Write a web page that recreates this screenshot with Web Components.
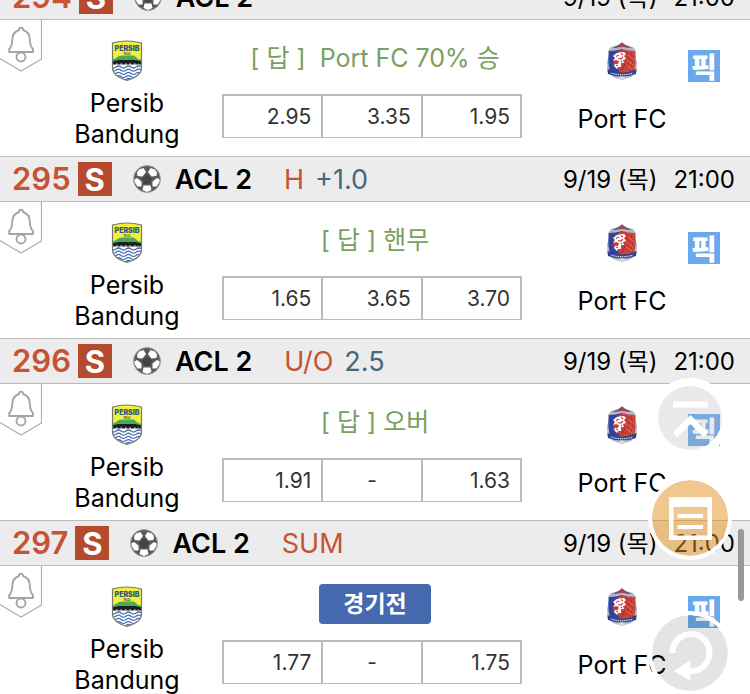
<!DOCTYPE html>
<html lang="ko">
<head>
<meta charset="utf-8">
<meta name="viewport" content="width=device-width, initial-scale=1">
<title>ACL 2</title>
<style>
html, body { margin: 0; height: 100%; overflow: hidden; background: #fff; }
body { font-family: Inter, "Noto Sans CJK KR", sans-serif; color: #000; }
</style>
</head>
<body>
<match-app></match-app>

<template id="t-app">
<style>
:host { display: block; position: relative; height: 100vh; overflow: hidden; }
main { margin-top: -26px; }
.thumb { position: absolute; right: 6px; top: 529px; width: 6px; height: 72px; border-radius: 3px; background: #999; }
</style>
<main>
<match-row no="294" market="" day="9/19 (목)" time="21:00" odds="2.95,3.35,1.95"><answer-text>[ 답 ]&nbsp; Port FC 70% 승</answer-text></match-row>
<match-row no="295" market="H" line="+1.0" day="9/19 (목)" time="21:00" odds="1.65,3.65,3.70"><answer-text>[ 답 ] 핸무</answer-text></match-row>
<match-row no="296" market="U/O" line="2.5" day="9/19 (목)" time="21:00" odds="1.91,-,1.63"><answer-text>[ 답 ] 오버</answer-text></match-row>
<match-row no="297" market="SUM" day="9/19 (목)" time="21:00" odds="1.77,-,1.75"><status-badge>경기전</status-badge></match-row>
</main>
<float-tools></float-tools>
<div class="thumb"></div>
</template>

<template id="t-row">
<style>
:host { display: block; }
header { box-sizing: border-box; height: 46px; display: flex; align-items: center; padding: 0 15px 0 12px; background: #ececec; border-top: 1px solid #bbb; border-bottom: 1px solid #bbb; white-space: nowrap; }
header span { line-height: 36px; }
.no { font-size: 31px; font-weight: 600; color: #c65336; margin-right: 7px; }
.s { width: 34px; height: 34px; text-align: center; font-size: 31px; font-weight: 700; color: #fff; background: #b64a2e; }
soccer-ball { margin: 0 14px 0 21px; }
.league { font-size: 27px; font-weight: 600; }
.market { font-size: 27px; color: #c65336; margin-left: 32px; }
.line { font-size: 27px; color: #44697f; margin-left: 11px; }
.league, .market, .line, .when { padding-top: 2px; }
.when { margin-left: auto; display: flex; align-items: baseline; gap: 16px; font-size: 24px; }
.body { display: grid; grid-template-columns: 42px 170px minmax(0,1fr) 132px 62px; height: 136px; }
.team { display: flex; flex-direction: column; align-items: center; padding-top: 20px; }
.name { height: 62px; margin-top: 6px; display: flex; align-items: center; text-align: center; font-size: 25px; line-height: 31px; }
.home .name { width: 110px; justify-content: center; }
.mid { padding: 0 34px 0 10px; }
.answer { height: 76px; padding-left: 6px; display: flex; align-items: center; justify-content: center; }
odds-table { margin-top: -2px; }
.pick { appearance: none; border: 0; padding: 0; margin: 30px 0 0; width: 32px; height: 32px; background: #6aa9ee; color: #fff; font: 900 28px/30px "Noto Sans CJK KR", sans-serif; display: block; }
</style>
<header>
<span class="no"></span><span class="s">S</span><soccer-ball></soccer-ball><span class="league">ACL 2</span><span class="market"></span><span class="line"></span>
<span class="when"><span class="day"></span><span class="time"></span></span>
</header>
<div class="body">
<bell-tab></bell-tab>
<div class="team home"><persib-crest></persib-crest><div class="name">Persib Bandung</div></div>
<div class="mid"><div class="answer"><slot></slot></div><odds-table></odds-table></div>
<div class="team"><port-crest></port-crest><div class="name">Port FC</div></div>
<button class="pick">픽</button>
</div>
</template>

<template id="t-answer"><style>:host { display: block; font-size: 25px; line-height: 30px; color: #78a060; white-space: nowrap; }</style><slot></slot></template>

<template id="t-status"><style>:host { display: block; box-sizing: border-box; width: 112px; height: 40px; line-height: 40px; text-align: center; border-radius: 4px; background: #4668ae; color: #fff; font-size: 23px; font-weight: 700; }</style><slot></slot></template>

<template id="t-odds">
<style>
:host { display: block; }
table { width: 100%; height: 44px; border-collapse: separate; border-spacing: 0; table-layout: fixed; border-left: 2px solid #bbb; border-top: 2px solid #bbb; }
td { padding: 1px 10px 0 0; border-right: 2px solid #bbb; border-bottom: 1px solid #bbb; text-align: right; font-size: 21px; line-height: 24px; color: #333; }
td.none { text-align: center; padding: 1px 0 0; }
</style>
<table><tbody><tr></tr></tbody></table>
</template>

<template id="t-bell">
<style>
:host { display: block; }
button { appearance: none; display: block; border: 0; background: none; padding: 0; }
svg { display: block; }
</style>
<button aria-label="알림"><svg width="42" height="52" viewBox="0 0 42 52" fill="none">
<path d="M41.500 0V39L21 51L0 38.500" stroke="#b0b0b0" stroke-width="1.200"/>
<path d="M19 10Q19 7.800 21 7.800T23 10Q29.500 12 29.800 19Q29.800 26 33 29V32H9.200V29Q12.300 26 12.300 19Q12.800 12 19 10Z" stroke="#a5a5a5" stroke-width="1.900" stroke-linejoin="round"/>
<circle cx="21" cy="37" r="4.500" stroke="#a5a5a5" stroke-width="1.900"/>
</svg></button>
</template>

<template id="t-ball">
<style>:host { display: block; } svg { display: block; }</style>
<svg width="28" height="28" viewBox="0 0 28 28">
<circle cx="14" cy="14" r="13.500" fill="#5a5a5a" stroke="#a5a5a5" stroke-width="1"/>
<g fill="#fff"><path d="M6 4.500L10.500 3L13 7L9.500 11.500L4.500 11L4 7.500Z"/><path d="M22 4.500L17.500 3L15 7L18.500 11.500L23.500 11L24 7.500Z"/><path d="M1.200 14.500L4 13L8.500 16.500L8.500 21.500L4.500 21.500Q1.500 18 1.200 14.500Z"/><path d="M26.800 14.500L24 13L19.500 16.500L19.500 21.500L23.500 21.500Q26.500 18 26.800 14.500Z"/><path d="M10.500 20.500H17.500L18.500 25L14 27L9.500 25Z"/></g>
<path d="M14 9.500L19 13.200L17 19H11L9 13.200Z" fill="#444"/>
</svg>
</template>

<template id="t-persib">
<style>:host { display: block; } svg { display: block; }</style>
<svg width="32" height="42" viewBox="0 0 32 42">
<defs><clipPath id="c"><path d="M1.500 3Q9 1 16 1T30.500 3V28Q30.500 36 16 40.500Q1.500 36 1.500 28Z"/></clipPath></defs>
<g clip-path="url(#c)">
<path fill="#f4ee3e" d="M0 0H32V23H0Z"/>
<path fill="#48ab58" d="M1 20L5 18L8 16L12 15.500H23L27 19L31 20V24H1Z"/>
<path fill="#fff" d="M0 24H32V42H0Z"/>
<path fill="#1d2020" d="M1 21.500L5 20.500L8 20H24L31 21.500V24.500H1Z"/>
<path stroke="#fff" stroke-width="1" stroke-dasharray="1.500 3" d="M5 24H28"/>
<g fill="none" stroke="#4a6cb8" stroke-width="1.300"><path id="w" d="M0 27Q2.500 29 5 27T10 27T15 27T20 27T25 27T32 27"/><use href="#w" y="3.200"/><use href="#w" y="6.400"/><use href="#w" y="9.600"/><use href="#w" y="12.500"/></g>
</g>
<path d="M1.500 3Q9 1 16 1T30.500 3V28Q30.500 36 16 40.500Q1.500 36 1.500 28Z" fill="none" stroke="#727a70" stroke-width="1.200"/>
<text x="16" y="10.500" text-anchor="middle" font-family="Inter, sans-serif" font-size="7" font-weight="900" fill="#31577a">PERSIB</text>
<text x="16" y="14.500" text-anchor="middle" font-family="Inter, sans-serif" font-size="3" font-weight="700" fill="#4a4a30">1933</text>
</svg>
</template>

<template id="t-port">
<style>:host { display: block; } svg { display: block; }</style>
<svg width="32" height="42" viewBox="0 0 32 42">
<path d="M16 2L20 5L27 7L30 11L29.500 18L31 22L30.500 32L25 37L16 40L7 37L1.500 32L1 22L2.500 18L2 11L5 7L12 5Z" fill="#b4b8c6"/>
<path d="M16 2.500L20 5.500L26 8L16 7L6 8L12 5.500Z" fill="#a94350"/>
<path d="M9 7.500L13 6M19 6L23 7.500" stroke="#46549a" stroke-width="1.300"/>
<path d="M3 11Q10 11 16 9V33H5Q1 25 3 11Z" fill="#3142a0"/>
<path d="M16 9Q22 11 29 11Q31 25 27 33H13Z" fill="#cf4530"/>
<path d="M9 14L14 10L20 10L25 14L24 18L27 21L23 23L24 28L19 27L17 32L12 30L10 26L7 25Z" fill="#cf3e34"/>
<path d="M7 16L10 13.500L13 12.500L18 12L20 14L18 16L20 19L17 20L18 23L15 23L15 27L12 27L11 29L8 26L9 24L12 24L13 21L10 20L7 21L9 18Z" fill="#fff"/>
<path d="M10 16.500L13 15M12 18.500L15 19L17 17M15 13.500L17 15M10 25L12 26M15 21L16 22" stroke="#c0444c" stroke-width="1.200" fill="none"/>
<path d="M20 12Q26 19 20 29M24 12Q29 20 24 30M19 24L16 31" stroke="#993042" stroke-width=".9" fill="none"/>
<path d="M22 15L28 20M21 20L27 25M20 25L26 29" stroke="#ea8468" stroke-width=".8"/>
<path d="M1.500 29Q16 36 30.500 29L30 34Q16 39 2 34Z" fill="#2f4190"/>
<path d="M5 33Q16 36.500 27 33" fill="none" stroke="#ccd0df" stroke-width="1.300" stroke-dasharray="1.500 .7"/>
<path d="M12 38L16 36L20 38L16 40Z" fill="#d9dbe4"/>
</svg>
</template>

<template id="t-float">
<style>
:host { position: absolute; right: 18px; top: 378px; width: 84px; display: flex; flex-direction: column; align-items: center; }
button { appearance: none; box-sizing: border-box; padding: 0; border: 4px solid #fff; border-radius: 50%; width: 84px; height: 84px; background-clip: padding-box; display: block; }
svg { display: block; width: 100%; height: 100%; }
.top { width: 80px; height: 80px; border-width: 8px; background-color: rgba(169,169,169,.26); margin: 0 0 18px; }
.list { background-color: rgba(225,143,31,.5); margin-bottom: 51px; }
.reload { background-color: rgba(50,50,50,.13); }
</style>
<button class="top" aria-label="맨 위로"><svg viewBox="0 0 64 64" fill="none" stroke="#fff"><path d="M15 18.500H50" stroke-width="6"/><path d="M17 49L32.500 33.500L48 49" stroke-width="6.500"/></svg></button>
<button class="list" aria-label="목록"><svg viewBox="0 0 76 76"><path fill="#fff" fill-rule="evenodd" d="M17 17H60V60H17ZM21.500 27V55.500H55.500V27Z"/><path fill="#fff" d="M25.500 34H51V38H25.500ZM25.500 45H51V49H25.500Z"/></svg></button>
<button class="reload" aria-label="새로고침"><svg viewBox="0 0 76 76"><path d="M20.500 38A18.500 18.500 0 1 1 38.500 56" fill="none" stroke="#fff" stroke-width="6"/><path fill="#fff" d="M22 56L38.500 45V66Z"/></svg></button>
</template>

<script>
const mount = (host, id) => {
  const root = host.attachShadow({ mode: "open" });
  root.append(document.getElementById(id).content.cloneNode(true));
  return root;
};
const simple = (name, id) => customElements.define(name, class extends HTMLElement {
  constructor() { super(); mount(this, id); }
});
simple("answer-text", "t-answer");
simple("status-badge", "t-status");
simple("bell-tab", "t-bell");
simple("soccer-ball", "t-ball");
simple("persib-crest", "t-persib");
simple("port-crest", "t-port");
simple("float-tools", "t-float");

customElements.define("odds-table", class extends HTMLElement {
  constructor() { super(); mount(this, "t-odds"); }
  set values(list) {
    this.shadowRoot.querySelector("tr").replaceChildren(...list.map(v => {
      const td = document.createElement("td");
      td.textContent = v;
      if (v === "-") td.className = "none";
      return td;
    }));
  }
});

customElements.define("match-row", class extends HTMLElement {
  constructor() { super(); mount(this, "t-row"); }
  connectedCallback() {
    for (const key of ["no", "market", "line", "day", "time"])
      this.shadowRoot.querySelector("." + key).textContent = this.getAttribute(key) || "";
    const odds = this.shadowRoot.querySelector("odds-table");
    customElements.upgrade(odds);
    odds.values = this.getAttribute("odds").split(",");
  }
});
simple("match-app", "t-app");
</script>
</body>
</html>
